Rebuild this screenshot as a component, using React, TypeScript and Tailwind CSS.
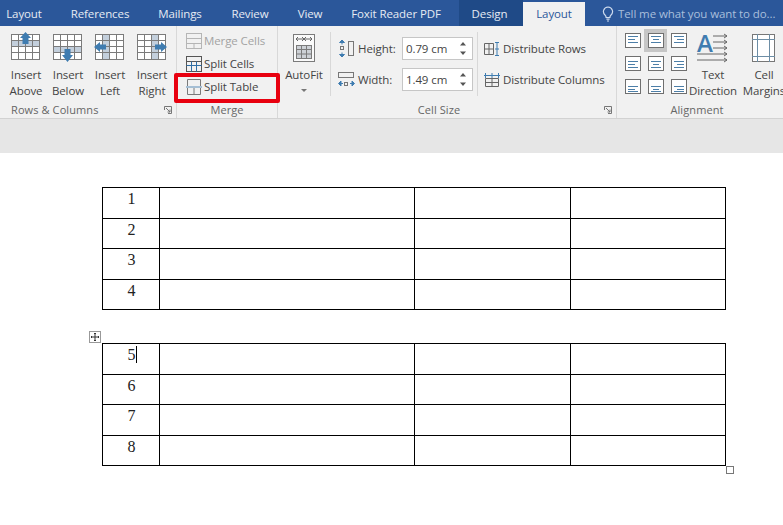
import React from "react";

const font = { fontFamily: '"Open Sans","Noto Sans",sans-serif' };

function Tab({ label, w, cls = "" }: { label: string; w: string; cls?: string }) {
  return <div className={`${w} ${cls} flex h-full items-center justify-center whitespace-nowrap pt-[2px]`}>{label}</div>;
}

function InsertIcon({ dir }: { dir: "up" | "down" | "left" | "right" }) {
  const band =
    dir === "up" ? <rect x="1" y="7" width="28" height="6" fill="#c3cfdc" /> :
    dir === "down" ? <rect x="1" y="13" width="28" height="6" fill="#c3cfdc" /> :
    dir === "left" ? <rect x="7" y="1" width="7" height="24" fill="#c3cfdc" /> :
    <rect x="14" y="1" width="7" height="24" fill="#c3cfdc" />;
  const arrow =
    dir === "up" ? "M14.5 -2 L20 4 H17.5 V10 H11.5 V4 H9 Z" :
    dir === "down" ? "M14.5 28 L20 21 H17.5 V15 H11.5 V21 H9 Z" :
    dir === "left" ? "M-1 13 L5 8 V10.5 H11 V15.5 H5 V18 Z" :
    "M30 13 L24 8 V10.5 H18 V15.5 H24 V18 Z";
  return (
    <svg width="32" height="30" viewBox="-1 -2 32 30">
      <rect x="0.5" y="0.5" width="28" height="25" fill="#fff" />
      {band}
      <g stroke="#7b7b7b" strokeWidth="1" fill="none">
        <rect x="0.5" y="0.5" width="28" height="25" />
        <path d="M0.5 6.5H28.5M0.5 12.5H28.5M0.5 18.5H28.5M7.5 .5V25.5M14.5 .5V25.5M21.5 .5V25.5" />
      </g>
      <path d={arrow} fill="#3f7cb0" />
    </svg>
  );
}

function InsertBtn({ dir, a, b }: { dir: "up" | "down" | "left" | "right"; a: string; b: string }) {
  return (
    <div className="flex w-[42px] flex-col items-center pt-[6px]">
      <InsertIcon dir={dir} />
      <div className="mt-[5px] text-center leading-[16px]">{a}<br />{b}</div>
    </div>
  );
}

function SmallTable({ kind }: { kind: "merge" | "cells" | "split" }) {
  if (kind === "merge")
    return (
      <svg width="16" height="16" viewBox="0 0 16 16" fill="none" stroke="#b5b5b5">
        <rect x="0.5" y="0.5" width="15" height="15" />
        <path d="M0.5 5.5H15.5M0.5 10.5H15.5M8 10.5V15.5" />
      </svg>
    );
  if (kind === "cells")
    return (
      <svg width="16" height="16" viewBox="0 0 16 16" fill="none" stroke="#555">
        <rect x="0.5" y="0.5" width="15" height="15" />
        <path d="M0.5 5.5H15.5" />
        <path d="M0.5 9.5H15.5M5.5 5.5V15.5M10.5 5.5V15.5" stroke="#2f6ea5" />
      </svg>
    );
  return (
    <svg width="16" height="16" viewBox="0 0 16 16" fill="none" stroke="#7a7a7a">
      <path d="M1.5 7V0.5H14.5V7M1.5 9V15.5H14.5V9M8 9V15.5" />
      <path d="M0 8H16" stroke="#5b8db8" />
    </svg>
  );
}

function MergeRow({ kind, label, cls = "" }: { kind: "merge" | "cells" | "split"; label: string; cls?: string }) {
  return (
    <div className={`flex h-[23px] items-center gap-[2px] pl-[9px] ${cls}`}>
      <SmallTable kind={kind} />
      <span>{label}</span>
    </div>
  );
}

function Spinner({ value }: { value: string }) {
  return (
    <div className="flex h-[23px] w-[71px] items-center justify-between border border-[#c6c6c6] bg-white pl-[3px] pr-[5px]">
      <span>{value}</span>
      <svg width="8" height="17" viewBox="0 0 8 17" fill="#555">
        <path d="M4 2L7 5.5H1ZM4 15L1 11.5H7Z" />
      </svg>
    </div>
  );
}

function AlignIcon({ row, col }: { row: number; col: number }) {
  const ys = [[3.5, 6.5, 9.5], [5.5, 8.5, 11.5], [7.5, 10.5, 12.5]][row];
  const xs = col === 0 ? [[3, 13], [3, 10], [3, 13]] : col === 1 ? [[3, 13], [5, 11], [3, 13]] : [[3, 13], [6, 13], [3, 13]];
  return (
    <svg width="16" height="16" viewBox="0 0 16 16" fill="none">
      <rect x="0.5" y="0.5" width="15" height="14" stroke="#6f6f6f" fill="#fff" />
      {ys.map((y, i) => (
        <path key={i} d={`M${xs[i][0]} ${y}H${xs[i][1]}`} stroke="#4d7fa8" />
      ))}
    </svg>
  );
}

function Label({ text, launcher, cls = "" }: { text: string; launcher?: boolean; cls?: string }) {
  return (
    <div className={`relative flex h-[16px] items-center text-[11px] tracking-[0.1px] text-[#666] ${cls}`}>
      <span>{text}</span>
      {launcher && (
        <svg className="absolute right-[4px] top-[4px]" width="8" height="8" viewBox="0 0 8 8" fill="none" stroke="#777">
          <path d="M.5 4V.5H7.5V7.5H4M2 2L6 6M6 3.5V6H3.5" />
        </svg>
      )}
    </div>
  );
}

function DocTable({ nums, first }: { nums: string[]; first?: boolean }) {
  const heights = ["h-[31px]", "h-[30px]", "h-[31px]", "h-[30px]"];
  return (
    <div className="relative w-[624px] border-b border-r border-black">
      {nums.map((n, i) => (
        <div key={n} className={`grid ${heights[i]} grid-cols-[57px_255px_156px_155px] border-t border-black`}>
          <div className="relative flex justify-center border-l border-black pl-[1px] pt-[1px] text-[16px] leading-[20px]">
            {n}
            {!first && i === 0 && <span className="absolute left-[33px] top-[2px] h-[17px] w-px bg-black" />}
          </div>
          <div className="border-l border-black" />
          <div className="border-l border-black" />
          <div className="border-l border-black" />
        </div>
      ))}
      {!first && (
        <>
          <div className="absolute left-[-13px] top-[-12px] flex h-[12px] w-[12px] items-center justify-center border border-[#999] bg-white">
            <svg width="8" height="8" viewBox="0 0 8 8" fill="none" stroke="#333">
              <path d="M4 0V8M0 4H8M3 1L4 0L5 1M3 7L4 8L5 7M1 3L0 4L1 5M7 3L8 4L7 5" />
            </svg>
          </div>
          <div className="absolute bottom-[-9px] right-[-9px] h-[8px] w-[8px] border border-[#777] bg-white" />
        </>
      )}
    </div>
  );
}

export default function App() {
  return (
    <div className="flex h-[525px] w-[783px] flex-col overflow-hidden bg-white text-[11.5px] tracking-[-0.1px] text-[#444]" style={font}>
      {/* Tabs */}
      <div className="flex h-[26px] shrink-0 items-end bg-[#2b579a] text-[#e6ebf3]">
        <Tab label="Layout" w="w-[48px]" />
        <Tab label="References" w="w-[80px] ml-[12px]" />
        <Tab label="Mailings" w="w-[80px]" />
        <Tab label="Review" w="w-[60px]" />
        <Tab label="View" w="w-[60px]" />
        <Tab label="Foxit Reader PDF" w="w-[112px]" />
        <Tab label="Design" w="w-[64px] ml-[7px] pr-[3px]" cls="bg-[#1f4a87]" />
        <div className="flex h-[24px] w-[62px] items-center justify-center bg-[#f1f1f1] text-[#2b579a]">Layout</div>
        <div className="ml-[17px] flex h-full items-center whitespace-nowrap pt-[2px] text-[#a9bfdc]">
          <svg width="12" height="16" viewBox="1 0 12 16" fill="none" stroke="#cfdcee" strokeWidth="1.2">
            <path d="M7 1a4.6 4.6 0 0 0-2.8 8.2c.7.6.9 1.3.9 2.3h3.8c0-1 .2-1.7.9-2.3A4.6 4.6 0 0 0 7 1ZM5.4 13.2h3.2M6 15h2" />
          </svg>
          <span className="ml-[4px]">Tell me what you want to do...</span>
        </div>
      </div>

      {/* Ribbon */}
      <div className="flex h-[93px] shrink-0 border-b border-[#d2d2d2] bg-[#f1f1f1]">
        {/* Rows & Columns */}
        <div className="flex w-[177px] flex-col border-r border-[#d8d8d8]">
          <div className="flex h-[76px] pl-[5px]">
            <InsertBtn dir="up" a="Insert" b="Above" />
            <InsertBtn dir="down" a="Insert" b="Below" />
            <InsertBtn dir="left" a="Insert" b="Left" />
            <InsertBtn dir="right" a="Insert" b="Right" />
          </div>
          <Label text="Rows & Columns" launcher cls="pl-[11px]" />
        </div>

        {/* Merge */}
        <div className="flex w-[101px] flex-col border-r border-[#d8d8d8]">
          <div className="flex h-[76px] flex-col pt-[3px]">
            <MergeRow kind="merge" label="Merge Cells" cls="text-[#a3a3a3]" />
            <MergeRow kind="cells" label="Split Cells" />
            <div className="relative">
              <MergeRow kind="split" label="Split Table" />
              <div className="absolute bottom-[-5px] left-[-3px] right-[-3px] top-[-2px] rounded-[2px] border-[4px] border-[#e8000f]" />
            </div>
          </div>
          <Label text="Merge" cls="justify-center" />
        </div>

        {/* Cell Size */}
        <div className="flex w-[339px] flex-col border-r border-[#d8d8d8]">
          <div className="flex h-[76px]">
            <div className="flex w-[52px] flex-col items-center pt-[8px]">
              <svg width="24" height="28" viewBox="0 0 24 28" fill="none" stroke="#7b7b7b">
                <rect x="1.5" y="0.5" width="21" height="27" fill="#fafafa" />
                <path d="M4 5H20M4 5l2-2M4 5l2 2M20 5l-2-2M20 5l-2 2M10 3l4 4M14 3l-4 4" stroke="#666" />
                <rect x="4.5" y="11.5" width="15" height="13" fill="#cdd1d6" />
                <path d="M4.5 15.5H19.5M4.5 20H19.5M9.5 11.5V24.5M14.5 11.5V24.5" />
              </svg>
              <div className="mt-[5px] leading-[16px]">AutoFit</div>
              <svg className="mt-[6px]" width="6" height="3" viewBox="0 0 6 3" fill="#777"><path d="M0 0H6L3 3Z" /></svg>
            </div>
            <div className="my-[6px] w-px bg-[#d8d8d8]" />
            <div className="flex w-[146px] flex-col gap-[8px] pl-[7px] pt-[11px]">
              <div className="flex items-center">
                <svg width="17" height="17" viewBox="0 0 17 17" fill="none" stroke="#777">
                  <rect x="10.5" y="1.5" width="5" height="14" />
                  <path d="M4 0.5V4.5M4 16.5V12.5" stroke="#3f7cb0" />
                  <path d="M1.5 2.5L4 0L6.5 2.5ZM1.5 14.5L4 17L6.5 14.5Z" fill="#3f7cb0" stroke="#3f7cb0" />
                  <rect x="2.5" y="6.5" width="3" height="3" />
                </svg>
                <span className="ml-[3px] w-[44px]">Height:</span>
                <Spinner value="0.79 cm" />
              </div>
              <div className="flex items-center">
                <svg width="17" height="17" viewBox="0 0 17 17" fill="none" stroke="#777">
                  <rect x="0.5" y="1.5" width="15" height="5" />
                  <path d="M1 12.5H5M16 12.5H12" stroke="#3f7cb0" />
                  <path d="M3 10L0.5 12.5L3 15ZM14 10L16.5 12.5L14 15Z" fill="#3f7cb0" stroke="#3f7cb0" />
                  <rect x="6.5" y="11.5" width="3" height="3" />
                </svg>
                <span className="ml-[3px] w-[44px]">Width:</span>
                <Spinner value="1.49 cm" />
              </div>
            </div>
            <div className="my-[6px] w-px bg-[#d8d8d8]" />
            <div className="flex flex-col gap-[8px] pl-[6px] pt-[11px]">
              <div className="flex h-[23px] items-center gap-[3px] whitespace-nowrap">
                <svg width="16" height="16" viewBox="0 0 16 16" fill="none" stroke="#666">
                  <path d="M.5 2.5H9.5V13.5H.5ZM.5 8H9.5M5 2.5V13.5" />
                  <path d="M13 1V15M11 1.5H15M11 14.5H15M11 8H15" stroke="#3f7cb0" />
                </svg>
                <span>Distribute Rows</span>
              </div>
              <div className="flex h-[23px] items-center gap-[3px] whitespace-nowrap">
                <svg width="16" height="16" viewBox="0 0 16 16" fill="none" stroke="#666">
                  <path d="M1.5 6.5H14.5V14.5H1.5ZM1.5 10.5H14.5M8 6.5V14.5" />
                  <path d="M0 3.5H16M1.5 1V6M8 1V6M14.5 1V6" stroke="#3f7cb0" />
                </svg>
                <span>Distribute Columns</span>
              </div>
            </div>
          </div>
          <Label text="Cell Size" launcher cls="justify-center pr-[16px]" />
        </div>

        {/* Alignment */}
        <div className="flex min-w-0 flex-1 flex-col">
          <div className="flex h-[76px]">
            <div className="ml-[4px] mt-[3px] grid h-[69px] w-[69px] shrink-0 grid-cols-3 grid-rows-3">
              {[0, 1, 2].map((r) =>
                [0, 1, 2].map((c) => (
                  <div key={`${r}${c}`} className={`flex items-center justify-center ${r === 0 && c === 1 ? "bg-[#c6c6c6]" : ""}`}>
                    <AlignIcon row={r} col={c} />
                  </div>
                ))
              )}
            </div>
            <div className="flex w-[46px] shrink-0 flex-col items-center pt-[6px]">
              <svg width="34" height="32" viewBox="0 0 34 32" fill="none" stroke="#666" className="shrink-0">
                <text x="1" y="20" fontSize="24" fontWeight="600" fill="#3f7cb0" stroke="none" style={{ fontFamily: '"Open Sans",sans-serif' }}>A</text>
                <path d="M17 4H31M28 2l3 2-3 2M17 10H31M28 8l3 2-3 2M17 16H31M28 14l3 2-3 2M1 22H31M28 20l3 2-3 2M1 28H31M28 26l3 2-3 2" />
              </svg>
              <div className="mt-[3px] text-center leading-[16px]">Text<br />Direction</div>
            </div>
            <div className="flex w-[56px] shrink-0 flex-col items-center pt-[8px]">
              <svg width="24" height="28" viewBox="0 0 24 28" fill="none" stroke="#6d8ea6">
                <rect x="0.5" y="0.5" width="22" height="27" fill="#fff" stroke="#777" />
                <path d="M5.5 0V28M17.5 0V28M0 5.5H23M0 22.5H23" />
              </svg>
              <div className="mt-[5px] whitespace-nowrap text-center leading-[16px]">Cell<br />Margins</div>
            </div>
          </div>
          <Label text="Alignment" cls="justify-center pr-[6px]" />
        </div>
      </div>

      {/* Gray band */}
      <div className="h-[34px] shrink-0 bg-[#e6e6e6]" />

      {/* Page */}
      <div className="flex flex-1 flex-col items-start gap-[33px] bg-white pl-[102px] pt-[34px] text-[#222]" style={{ fontFamily: '"Liberation Serif",serif' }}>
        <DocTable first nums={["1", "2", "3", "4"]} />
        <DocTable nums={["5", "6", "7", "8"]} />
      </div>
    </div>
  );
}
